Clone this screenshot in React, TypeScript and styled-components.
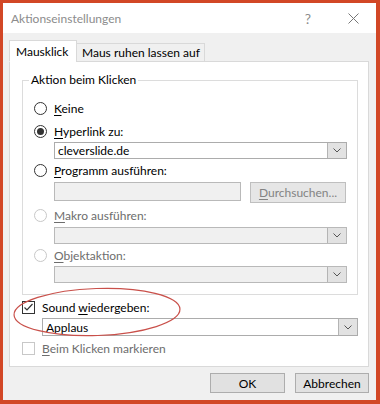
import styled, { createGlobalStyle } from "styled-components"

const GlobalStyle = createGlobalStyle`
  html, body { margin: 0; padding: 0; background: #ffffff; }
  body { font-family: Lato, "Noto Sans", "DejaVu Sans", sans-serif; font-size: 12px; color: #000; }
  * { box-sizing: border-box; }
`

const Stage = styled.div`
  position: relative;
  width: 380px;
  height: 404px;
`

const Window = styled.div`
  width: 100%;
  height: 100%;
  border-style: solid;
  border-color: #d24726;
  border-width: 3px 4px 4px 3px;
  background: #f0f0f0;
  display: flex;
  flex-direction: column;
`

const TitleBar = styled.div`
  height: 30px;
  flex: none;
  background: #ffffff;
  display: flex;
  align-items: center;
`

const Title = styled.div`
  flex: 1;
  padding-left: 8px;
  color: #8c8c8c;
  font-size: 12px;
`

const TitleButton = styled.div<{ $w: number }>`
  width: ${p => p.$w}px;
  height: 30px;
  display: flex;
  align-items: center;
  justify-content: center;
  color: #8c8c8c;
  font-size: 14px;
`

const Body = styled.div`
  flex: 1;
  display: flex;
  flex-direction: column;
  padding: 7px 7px 7px 6px;
`

const TabRow = styled.div`
  display: flex;
  align-items: flex-end;
  height: 22px;
  margin-bottom: -1px;
  position: relative;
  z-index: 1;
`

const Tab = styled.div<{ $active?: boolean; $w: number }>`
  width: ${p => p.$w}px;
  height: ${p => (p.$active ? 22 : 19)}px;
  display: flex;
  align-items: center;
  padding-left: ${p => (p.$active ? 6 : 5)}px;
  border: 1px solid #d9d9d9;
  border-bottom-color: ${p => (p.$active ? "#ffffff" : "#d9d9d9")};
  background: ${p => (p.$active ? "#ffffff" : "#f0f0f0")};
  margin-left: ${p => (p.$active ? 0 : -1)}px;
  white-space: nowrap;
`

const Panel = styled.div`
  flex: none;
  background: #ffffff;
  border: 1px solid #d9d9d9;
  padding: 0 10px 11px 12px;
  display: flex;
  flex-direction: column;
`

const Group = styled.fieldset`
  margin: 10px 0 0 0;
  padding: 0;
  border: 1px solid #dcdcdc;
  min-width: 0;
`

const Legend = styled.legend`
  margin-left: 6px;
  padding: 0 2px;
  line-height: 16px;
  font-size: 12px;
`

const GroupBody = styled.div`
  display: flex;
  flex-direction: column;
  padding: 12px 10px 11px 11px;
`

const OptionRow = styled.div<{ $mt?: number; $disabled?: boolean }>`
  display: flex;
  align-items: center;
  gap: 7px;
  height: 16px;
  margin-top: ${p => p.$mt ?? 0}px;
  color: ${p => (p.$disabled ? "#6d6d6d" : "#000")};
  white-space: nowrap;
`

const RadioCircle = styled.span<{ $checked?: boolean; $disabled?: boolean }>`
  width: 13px;
  height: 13px;
  flex: none;
  border-radius: 50%;
  border: 1px solid ${p => (p.$disabled ? "#c8c8c8" : "#333333")};
  background: #ffffff;
  display: flex;
  align-items: center;
  justify-content: center;
  &::after {
    content: "";
    display: ${p => (p.$checked ? "block" : "none")};
    width: 7px;
    height: 7px;
    border-radius: 50%;
    background: #333333;
  }
`

const FieldRow = styled.div<{ $mt?: number; $indent?: number }>`
  display: flex;
  align-items: flex-start;
  gap: 9px;
  margin-top: ${p => p.$mt ?? 0}px;
  margin-left: ${p => p.$indent ?? 20}px;
`

const ComboBox = styled.div<{ $disabled?: boolean; $h: number }>`
  flex: 1;
  height: ${p => p.$h}px;
  display: flex;
  border: 1px solid ${p => (p.$disabled ? "#b9b9b9" : "#acacac")};
  background: ${p => (p.$disabled ? "#f0f0f0" : "#ffffff")};
`

const ComboText = styled.div`
  flex: 1;
  display: flex;
  align-items: center;
  padding-left: 3px;
  color: #000;
`

const ComboButton = styled.div`
  width: 19px;
  flex: none;
  display: flex;
  align-items: center;
  justify-content: center;
  background: #e2e2e2;
  border-left: 1px solid #b4b4b4;
`

const TextInput = styled.div`
  width: 187px;
  height: 19px;
  border: 1px solid #b9b9b9;
  background: #f0f0f0;
`

const DialogButton = styled.div<{ $w: number; $h: number; $disabled?: boolean }>`
  width: ${p => p.$w}px;
  height: ${p => p.$h}px;
  display: flex;
  align-items: center;
  justify-content: center;
  background: ${p => (p.$disabled ? "#e6e6e6" : "#e1e1e1")};
  border: 1px solid ${p => (p.$disabled ? "#bfbfbf" : "#adadad")};
  color: ${p => (p.$disabled ? "#838383" : "#000")};
`

const CheckRow = styled.div<{ $mt?: number; $disabled?: boolean }>`
  display: flex;
  align-items: center;
  gap: 7px;
  height: 13px;
  margin-top: ${p => p.$mt ?? 0}px;
  color: ${p => (p.$disabled ? "#6d6d6d" : "#000")};
  white-space: nowrap;
`

const CheckBox = styled.span<{ $disabled?: boolean }>`
  width: 13px;
  height: 13px;
  flex: none;
  border: 1px solid ${p => (p.$disabled ? "#c8c8c8" : "#333333")};
  background: #ffffff;
  display: flex;
  align-items: center;
  justify-content: center;
`

const Footer = styled.div`
  display: flex;
  justify-content: flex-end;
  gap: 10px;
  margin-top: 6px;
`

const Key = styled.span`
  text-decoration: underline;
  text-underline-offset: 2px;
`

const Overlay = styled.svg`
  position: absolute;
  left: 0;
  top: 0;
  pointer-events: none;
`

function Chevron() {
  return (
    <svg width="8" height="5" viewBox="0 0 8 5">
      <polyline points="0.5,0.5 4,4 7.5,0.5" fill="none" stroke="#555" strokeWidth="1" />
    </svg>
  )
}

function Combo({ text, disabled, h = 17 }: { text?: string; disabled?: boolean; h?: number }) {
  return (
    <ComboBox $disabled={disabled} $h={h}>
      <ComboText>{text}</ComboText>
      <ComboButton>
        <Chevron />
      </ComboButton>
    </ComboBox>
  )
}

export default function App() {
  return (
    <Stage>
      <GlobalStyle />
      <Window>
        <TitleBar>
          <Title>Aktionseinstellungen</Title>
          <TitleButton $w={44}>?</TitleButton>
          <TitleButton $w={46}>
            <svg width="11" height="11" viewBox="0 0 11 11">
              <path d="M0.5 0.5 L10.5 10.5 M10.5 0.5 L0.5 10.5" stroke="#777" strokeWidth="1" />
            </svg>
          </TitleButton>
        </TitleBar>
        <Body>
          <TabRow>
            <Tab $active $w={68}>Mausklick</Tab>
            <Tab $w={129}>Maus ruhen lassen auf</Tab>
          </TabRow>
          <Panel>
            <Group>
              <Legend>Aktion beim Klicken</Legend>
              <GroupBody>
                <OptionRow>
                  <RadioCircle />
                  <span><Key>K</Key>eine</span>
                </OptionRow>
                <OptionRow $mt={7}>
                  <RadioCircle $checked />
                  <span><Key>H</Key>yperlink zu:</span>
                </OptionRow>
                <FieldRow $mt={3}>
                  <Combo text="cleverslide.de" />
                </FieldRow>
                <OptionRow $mt={3}>
                  <RadioCircle />
                  <span><Key>P</Key>rogramm ausführen:</span>
                </OptionRow>
                <FieldRow $mt={4}>
                  <TextInput />
                  <DialogButton $w={96} $h={21} $disabled>
                    <span><Key>D</Key>urchsuchen...</span>
                  </DialogButton>
                </FieldRow>
                <OptionRow $mt={4} $disabled>
                  <RadioCircle $disabled />
                  <span><Key>M</Key>akro ausführen:</span>
                </OptionRow>
                <FieldRow $mt={4}>
                  <Combo disabled />
                </FieldRow>
                <OptionRow $mt={3} $disabled>
                  <RadioCircle $disabled />
                  <span><Key>O</Key>bjektaktion:</span>
                </OptionRow>
                <FieldRow $mt={3}>
                  <Combo disabled />
                </FieldRow>
              </GroupBody>
            </Group>
            <CheckRow $mt={6}>
              <CheckBox>
                <svg width="11" height="11" viewBox="0 0 11 11">
                  <polyline points="1.5,5.5 4,8 9.5,2" fill="none" stroke="#333" strokeWidth="1.2" />
                </svg>
              </CheckBox>
              <span>Sound <Key>w</Key>iedergeben:</span>
            </CheckRow>
            <FieldRow $mt={4}>
              <Combo text="Applaus" h={18} />
            </FieldRow>
            <CheckRow $mt={6} $disabled>
              <CheckBox $disabled />
              <span><Key>B</Key>eim Klicken markieren</span>
            </CheckRow>
          </Panel>
          <Footer>
            <DialogButton $w={75} $h={20}>OK</DialogButton>
            <DialogButton $w={74} $h={20}>Abbrechen</DialogButton>
          </Footer>
        </Body>
      </Window>
      <Overlay width="380" height="404" viewBox="0 0 380 404">
        <ellipse cx="97" cy="312" rx="83" ry="23.5" transform="rotate(-2 97 312)" fill="none" stroke="#c9504a" strokeWidth="1.2" />
      </Overlay>
    </Stage>
  )
}
